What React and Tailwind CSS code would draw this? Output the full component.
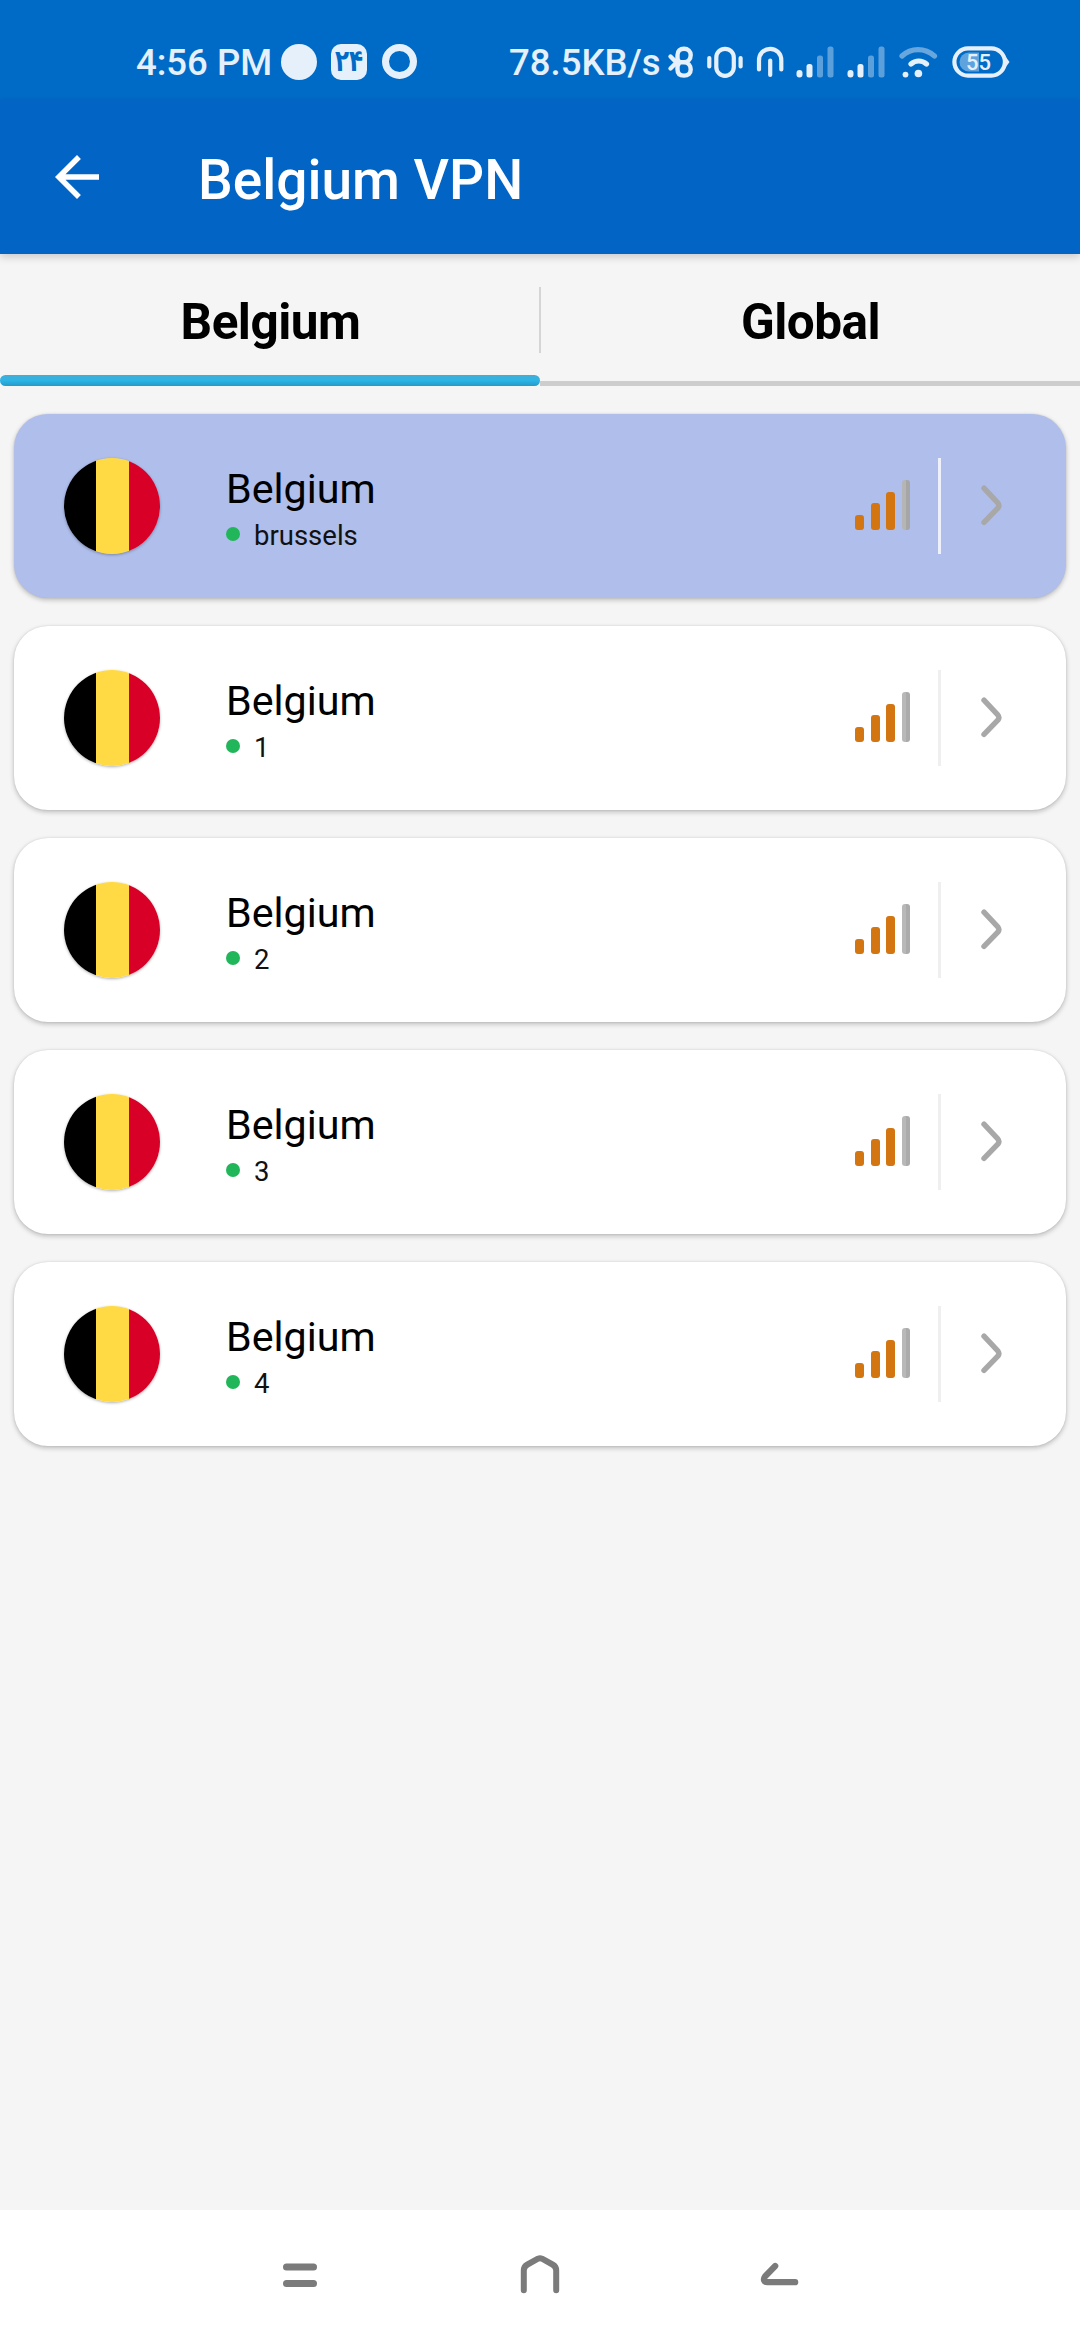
const servers = [
  { name: "Belgium", detail: "brussels", active: true },
  { name: "Belgium", detail: "1" },
  { name: "Belgium", detail: "2" },
  { name: "Belgium", detail: "3" },
  { name: "Belgium", detail: "4" },
];

function CellSignal({ className }) {
  return (
    <svg className={className} width="38" height="32" viewBox="0 0 38 32" fill="#E6F0FA">
      <rect x="0.5" y="24" width="6" height="7.5" rx="3" />
      <rect x="10.5" y="18" width="6" height="13.5" rx="2.5" />
      <rect x="21" y="9.5" width="6" height="22" rx="2.5" opacity="0.4" />
      <rect x="31.5" y="0.5" width="6" height="31" rx="2.5" opacity="0.4" />
    </svg>
  );
}

function StatusBar() {
  return (
    <header className="flex h-[100px] shrink-0 items-start bg-[#006BC7] pt-[44px] text-[#E6F0FA]">
      <div className="ml-[136px] h-[36px] w-[145px] whitespace-nowrap text-[36.5px] leading-[37px] font-medium">4:56 PM</div>
      <div className="size-[36px] rounded-full bg-[#E6F0FA]" />
      <div className="ml-[14px] flex size-[36px] items-center justify-center rounded-[10px] bg-[#E6F0FA] font-['DejaVu_Sans'] text-[23px] leading-none font-bold text-[#006BC7]">
        <span className="-mt-[1px] scale-y-130">۲۴</span>
      </div>
      <div className="ml-[15px] size-[35px] rounded-full border-[7px] border-[#E6F0FA]" />
      <div className="ml-[92px] h-[36px] w-[158px] whitespace-nowrap text-[36.5px] leading-[37px] font-medium">78.5KB/s</div>
      <svg className="mt-[2px]" width="27" height="34" viewBox="0 0 27 34" fill="none" stroke="#E6F0FA" strokeWidth="4.4" strokeLinecap="round" strokeLinejoin="round">
        <path d="M3.5 10.5 L11.5 18.5 M3.5 22.5 L11.5 14.5" />
        <path d="M10.5 16.2 V9 C10.5 5 13 2.8 17 2.8 C21 2.8 23.7 5.5 23.7 9 C23.7 13 21 16.2 17 16.2 H10.5 V23.5 C10.5 27.5 13 29.6 17 29.6 C21 29.6 23.7 27.5 23.7 23.5 C23.7 19.5 21 16.2 17 16.2" />
      </svg>
      <svg className="ml-[12px] mt-[2px]" width="38" height="34" viewBox="0 0 38 34" fill="none" stroke="#E6F0FA" strokeWidth="4.2" strokeLinecap="round">
        <rect x="10.3" y="2.8" width="17.5" height="27" rx="8.7" />
        <path d="M3.3 12 V20.5 M34.6 12 V20.5" />
      </svg>
      <svg className="ml-[12px] mt-[2px]" width="30" height="34" viewBox="0 0 30 34" fill="none" stroke="#E6F0FA" strokeWidth="4.2" strokeLinecap="round">
        <path d="M3 23.5 V14.5 C3 7.5 8 2.8 14.2 2.8 C20.5 2.8 25.3 7.5 25.3 14.5 V23.5" />
        <path d="M14.2 14.5 V29" />
      </svg>
      <CellSignal className="ml-[10px] mt-[2px]" />
      <CellSignal className="ml-[13px] mt-[2px]" />
      <svg className="ml-[13px] mt-[2px]" width="40" height="34" viewBox="0 0 40 34" fill="none" stroke="#E6F0FA" strokeWidth="5.2" strokeLinecap="round">
        <path d="M4 10 C13 1.5 27 1.5 36.5 10" opacity="0.45" />
        <path d="M13 18 C17.5 14 24 14 28.5 18" />
        <circle cx="7.5" cy="28.6" r="2.9" fill="#E6F0FA" stroke="none" />
        <circle cx="20.4" cy="27.5" r="3.8" fill="#E6F0FA" stroke="none" />
      </svg>
      <div className="relative ml-[14px] mt-[2px] h-[32px] w-[58px]">
        <svg width="58" height="32" viewBox="0 0 58 32" fill="none">
          <path d="M17 6.5 H27 V25.5 H17 A9.5 9.5 0 0 1 17 6.5 Z" fill="#5FA3DE" />
          <rect x="2.4" y="2.4" width="50.5" height="27.2" rx="13.6" stroke="#E6F0FA" strokeWidth="4.2" />
          <path d="M53.5 10.5 V21.5 L57.5 16 Z" fill="#E6F0FA" />
        </svg>
        <span className="absolute inset-y-0 left-0 w-[53px] text-center text-[22px] leading-[33px] font-medium">55</span>
      </div>
    </header>
  );
}

function AppBar() {
  return (
    <div className="relative z-10 flex h-[154px] shrink-0 items-center bg-[#0265C5] text-white shadow-[0_3px_8px_rgba(0,0,0,0.18)]">
      <svg className="ml-[55px]" width="44" height="44" viewBox="4 4 16 16" fill="currentColor">
        <path d="M20 11H7.83l5.59-5.59L12 4l-8 8 8 8 1.41-1.41L7.83 13H20v-2z" />
      </svg>
      <h1 className="ml-[99px] mt-[6px] whitespace-nowrap text-[55px] leading-[64px] font-medium">Belgium VPN</h1>
    </div>
  );
}

function Tabs() {
  return (
    <nav className="flex h-[132px] shrink-0 flex-col text-[49.5px] font-bold tracking-[-0.5px] text-black">
      <div className="flex h-[121px] items-start">
        <div className="w-[539px] pt-[39px] pl-[2px] text-center leading-[58px]">Belgium</div>
        <div className="mt-[33px] h-[66px] w-[2px] bg-[#D5D5D5]" />
        <div className="w-[539px] pt-[39px] text-center leading-[58px]">Global</div>
      </div>
      <div className="flex h-[11px] items-end">
        <div className="h-[11px] w-[540px] rounded-[6px] bg-linear-to-b from-[#43AED3] via-[#2DB4E6] via-50% to-[#259AC5]" />
        <div className="h-[5px] w-[540px] bg-[#CDCDCD]" />
      </div>
    </nav>
  );
}

function ServerCard({ name, detail, active }) {
  return (
    <li
      className={
        "flex h-[184px] items-center rounded-[34px] shadow-[0_2px_5px_rgba(0,0,0,0.24),0_0_2px_rgba(0,0,0,0.1)] " +
        (active ? "bg-[#AFBEEB]" : "bg-white")
      }
    >
      <div className="ml-[50px] flex size-[96px] overflow-hidden rounded-full shadow-[0_1px_3px_rgba(0,0,0,0.3)]">
        <div className="w-[31.5px] bg-black" />
        <div className="w-[33px] bg-[#FFDA44]" />
        <div className="flex-1 bg-[#D80027]" />
      </div>
      <div className="mt-[6px] ml-[66px] flex flex-1 flex-col gap-[5px]">
        <div className="text-[41.25px] leading-[48px] text-black">{name}</div>
        <div className="flex items-center">
          <div className="-mt-[3px] size-[14px] rounded-full bg-[#22B65A]" />
          <div className="ml-[14px] text-[27.5px] leading-[36px] text-[#111]">{detail}</div>
        </div>
      </div>
      <div className="mb-[2px] flex h-[50px] items-end gap-[6.6px]">
        <div className="h-[15px] w-[9px] rounded-[3px] bg-[#D37510]" />
        <div className="h-[27px] w-[9px] rounded-[3px] bg-[#D37510]" />
        <div className="h-[38px] w-[9px] rounded-[3px] bg-[#D37510]" />
        <div className={"h-[50px] w-[8px] rounded-[3px] bg-linear-to-r from-50% to-50% " + (active ? "from-[#B5B5B5] to-[#A6A6A6]" : "from-[#B8B8B8] to-[#ABABAB]")} />
      </div>
      <div className={"ml-[28px] h-[96px] w-[3px] " + (active ? "bg-[#EEF1FB]" : "bg-[#EFEFEF]")} />
      <svg className="mr-[62px] ml-[39px]" width="24" height="42" viewBox="0 0 24 42" fill="none" stroke="#A8A8A8" strokeWidth="5.4" strokeLinecap="round" strokeLinejoin="round">
        <path d="M4 3.2 L17.8 17.8 Q20 20.6 17.8 23.2 L4 37.4" />
      </svg>
    </li>
  );
}

function NavigationBar() {
  return (
    <footer className="flex h-[130px] shrink-0 items-start bg-white">
      <svg className="ml-[283px] mt-[53px]" width="34" height="25" viewBox="0 0 34 25" fill="#7B7B7B">
        <rect x="0" y="0.5" width="34" height="7" rx="3.5" />
        <rect x="0" y="17" width="34" height="7" rx="3.5" />
      </svg>
      <svg className="ml-[203px] mt-[45px]" width="40" height="39" viewBox="0 0 40 39" fill="none" stroke="#7B7B7B" strokeWidth="6" strokeLinecap="round" strokeLinejoin="round">
        <path d="M3.8 35.3 V15.5 Q3.8 11.5 7.5 9.5 L18 3.7 Q20 2.8 22 3.7 L32.5 9.5 Q36.2 11.5 36.2 15.5 V35.3" />
      </svg>
      <svg className="ml-[200px] mt-[51px]" width="40" height="26" viewBox="0 0 40 26" fill="none" stroke="#7B7B7B" strokeWidth="6.2" strokeLinecap="round" strokeLinejoin="round">
        <path d="M15.2 5 L5 15.5 C2.8 18.5 4.2 21.2 7.2 21.2 H35.2" />
      </svg>
    </footer>
  );
}

export default function App() {
  return (
    <div className="flex h-[2340px] w-[1080px] flex-col overflow-hidden bg-[#F5F5F5] font-[Roboto,sans-serif]">
      <StatusBar />
      <AppBar />
      <Tabs />
      <ul className="flex flex-1 flex-col gap-[28px] px-[14px] pt-[28px]">
        {servers.map((server) => (
          <ServerCard key={server.detail} {...server} />
        ))}
      </ul>
      <NavigationBar />
    </div>
  );
}
